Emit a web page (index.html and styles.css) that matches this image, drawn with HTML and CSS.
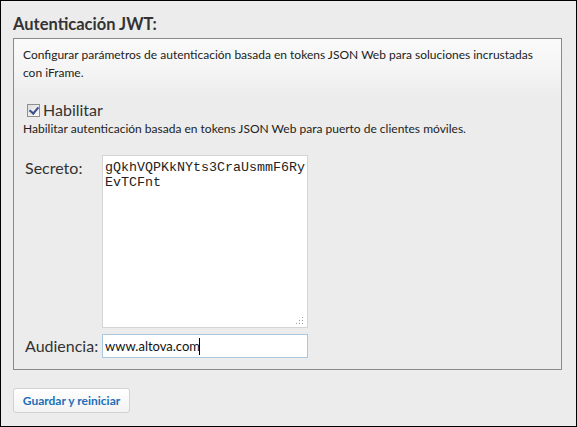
FILE: index.html
```html
<!DOCTYPE html>
<html lang="es">
<head>
  <meta charset="UTF-8" />
  <title>Autenticación JWT</title>
  <link rel="stylesheet" href="styles.css">
</head>
<body>
  <div class="frame">
    <h2 class="title">Autenticación JWT:</h2>
    <div class="group">
      <p class="desc">Configurar parámetros de autenticación basada en tokens JSON Web para soluciones incrustadas con iFrame.</p>
      <label class="enable"><input type="checkbox" checked> Habilitar</label>
      <p class="hint">Habilitar autenticación basada en tokens JSON Web para puerto de clientes móviles.</p>
      <div class="fields">
        <label class="field-label" for="secret">Secreto:</label>
        <div class="secret-wrap">
          <textarea id="secret" class="secret">gQkhVQPKkNYts3CraUsmmF6RyEvTCFnt</textarea>
          <svg class="grip" width="8" height="8" viewBox="0 0 8 8">
            <rect x="6" y="0" width="1" height="1" fill="#999"/>
            <rect x="3" y="3" width="1" height="1" fill="#999"/>
            <rect x="6" y="3" width="1" height="1" fill="#999"/>
            <rect x="0" y="6" width="1" height="1" fill="#999"/>
            <rect x="3" y="6" width="1" height="1" fill="#999"/>
            <rect x="6" y="6" width="1" height="1" fill="#999"/>
          </svg>
        </div>
        <label class="field-label" for="aud">Audiencia:</label>
        <div class="aud-wrap">
          <input id="aud" class="aud" type="text" value="www.altova.com"><span class="caret"></span>
        </div>
      </div>
    </div>
    <button class="save">Guardar y reiniciar</button>
  </div>
</body>
</html>
```

FILE: styles.css
```css
* { box-sizing: border-box; }
body {
  margin: 0;
  font-family: Lato, 'Noto Sans', sans-serif;
  color: #222;
}
.frame {
  width: 577px;
  height: 427px;
  border: 1px solid #000;
  background: #ececec;
  padding: 12px 14px 0 12px;
}
.title {
  margin: 0;
  font-size: 16.5px;
  font-weight: bold;
  color: #333;
  line-height: 22px;
  height: 25px;
}
.group {
  border: 1px solid #8a8a8a;
  background: linear-gradient(#fafafa 0px, #f5f5f5 30px, #ececec 58px);
  padding: 7px 20px 11px 9px;
}
.desc {
  margin: 0;
  font-size: 12px;
  line-height: 18px;
  height: 54px;
}
.enable {
  display: flex;
  align-items: center;
  gap: 3px;
  margin-left: 4px;
  font-size: 16px;
  color: #333;
  line-height: 20px;
}
.enable input {
  appearance: none;
  margin: 0;
  width: 13px;
  height: 13px;
  border: 1px solid #8e8f8f;
  background: linear-gradient(135deg, #dcdcdc, #fbfbfb);
  position: relative;
}
.enable input:checked::after {
  content: "";
  position: absolute;
  left: 3px;
  top: 0px;
  width: 4px;
  height: 7px;
  border: solid #3b4f8a;
  border-width: 0 2px 2px 0;
  transform: rotate(40deg);
}
.hint {
  margin: 0;
  font-size: 12px;
  line-height: 18px;
}
.fields {
  display: grid;
  grid-template-columns: 77px 206px;
  row-gap: 6px;
  margin: 17px 0 0 2px;
}
.field-label {
  font-size: 16px;
  color: #333;
}
.field-label[for="secret"] { padding-top: 3px; }
.field-label[for="aud"] { line-height: 24px; }
.secret-wrap {
  position: relative;
  height: 173px;
}
.secret {
  display: block;
  width: 206px;
  height: 173px;
  margin: 0;
  border: 1px solid #d4d4d4;
  padding: 4px 2px;
  font-family: 'Liberation Mono', monospace;
  font-size: 13.33px;
  line-height: 15px;
  color: #222;
  background: #fff;
  resize: none;
}
.grip {
  position: absolute;
  right: 4px;
  bottom: 3px;
}
.aud-wrap { position: relative; }
.aud {
  width: 206px;
  height: 24px;
  margin: 0;
  border: 1px solid #a9c7df;
  padding: 0 2px;
  font-family: Lato, sans-serif;
  font-size: 13px;
  color: #111;
  background: #fff;
  outline: none;
}
.caret {
  position: absolute;
  left: 97px;
  top: 4px;
  width: 1px;
  height: 17px;
  background: #000;
}
.save {
  margin-top: 18px;
  width: 117px;
  height: 25px;
  border: 1px solid #d2d2d2;
  border-radius: 3px;
  background: linear-gradient(#ffffff, #f3f3f3);
  color: #1c6fb8;
  font-family: Lato, sans-serif;
  font-weight: bold;
  font-size: 12px;
  padding: 0;
  cursor: pointer;
}
```
